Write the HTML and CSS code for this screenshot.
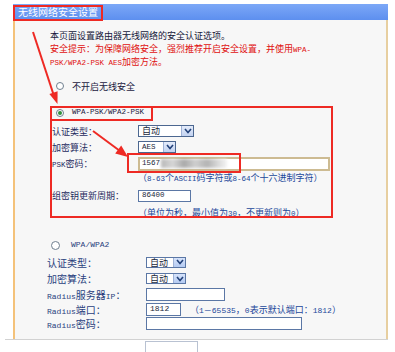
FILE: index.html
```html
<!DOCTYPE html>
<html lang="zh-CN">
<head>
<meta charset="utf-8">
<title>无线网络安全设置</title>
<link rel="stylesheet" href="styles.css">
</head>
<body>
<div class="page">
  <div class="panel">
    <div class="head">无线网络安全设置</div>
    <div class="body">
      <div class="intro">
        <p class="p1">本页面设置路由器无线网络的安全认证选项。</p>
        <p class="warn">安全提示：为保障网络安全，强烈推荐开启安全设置，并使用<span class="m">WPA-</span></p>
        <p class="warn"><span class="m">PSK/WPA2-PSK AES</span>加密方法。</p>
      </div>

      <div class="radio-row r1"><span class="radio"></span><span>不开启无线安全</span></div>
      <div class="radio-row r2"><span class="radio on"></span><span class="m">WPA-PSK/WPA2-PSK</span></div>

      <div class="sec top">
        <div class="row h16"><span class="lbl">认证类型：</span><span class="sel w56"><span class="val">自动</span><span class="btn"><svg viewBox="0 0 8 6" width="8" height="6"><polyline points="1,1 4,4.5 7,1" fill="none" stroke="#23427a" stroke-width="1.6"/></svg></span></span></div>
        <div class="row h16"><span class="lbl">加密算法：</span><span class="sel w38"><span class="val m">AES</span><span class="btn"><svg viewBox="0 0 8 6" width="8" height="6"><polyline points="1,1 4,4.5 7,1" fill="none" stroke="#23427a" stroke-width="1.6"/></svg></span></span></div>
        <div class="row h17"><span class="lbl"><span class="m">PSK</span>密码：</span><span class="psk"><span class="m">1567</span><span class="blur"></span></span></div>
        <div class="row h11"><span class="lbl"></span><span class="hint">（<span class="m">8-63</span>个<span class="m">ASCII</span>码字符或<span class="m">8-64</span>个十六进制字符）</span></div>
        <div class="row h19 mt3"><span class="lbl">组密钥更新周期：</span><span class="inp w53"><span class="m">86400</span></span></div>
        <div class="row h14"><span class="lbl"></span><span class="hint">（单位为秒，最小值为<span class="m">30</span>，不更新则为<span class="m">0</span>）</span></div>
      </div>

      <div class="radio-row r3"><span class="radio big"></span><span class="m2">WPA/WPA2</span></div>

      <div class="sec bot">
        <div class="row h16"><span class="lbl">认证类型：</span><span class="sel s2 w40"><span class="val">自动</span><span class="btn"><svg viewBox="0 0 8 6" width="8" height="6"><polyline points="1,1 4,4.5 7,1" fill="none" stroke="#23427a" stroke-width="1.6"/></svg></span></span></div>
        <div class="row h17"><span class="lbl">加密算法：</span><span class="sel s2 w40"><span class="val">自动</span><span class="btn"><svg viewBox="0 0 8 6" width="8" height="6"><polyline points="1,1 4,4.5 7,1" fill="none" stroke="#23427a" stroke-width="1.6"/></svg></span></span></div>
        <div class="row h15"><span class="lbl"><span class="m2">Radius</span>服务器<span class="m2">IP</span>：</span><span class="inp i2 w79"></span></div>
        <div class="row h14"><span class="lbl"><span class="m2">Radius</span>端口：</span><span class="inp i2 w35"><span class="m2">1812</span></span><span class="hint h2">（<span class="m2">1－65535</span>，<span class="m2">0</span>表示默认端口：<span class="m2">1812</span>）</span></div>
        <div class="row h14"><span class="lbl"><span class="m2">Radius</span>密码：</span><span class="inp i2 w156"></span></div>
      </div>
    </div>
  </div>
  <div class="rule"></div>
  <div class="stub"></div>
</div>

<svg class="ann" width="395" height="352" viewBox="0 0 395 352">
  <g fill="none" stroke="#ee2a24" stroke-width="2">
    <rect x="14" y="6" width="88" height="14"/>
    <rect x="51" y="107" width="281" height="110"/>
    <rect x="51" y="107" width="101" height="13"/>
    <rect x="128" y="154" width="112" height="18"/>
    <line x1="33" y1="32" x2="54" y2="96"/>
    <line x1="93" y1="131" x2="120" y2="151"/>
  </g>
  <g fill="#ee2a24">
    <polygon points="57.5,104 57.6,91.3 49.4,93.9"/>
    <polygon points="128,157 121.2,145.6 115.2,153.6"/>
  </g>
</svg>
</body>
</html>
```

FILE: styles.css
```css
* { box-sizing: border-box; margin: 0; padding: 0; }

body {
  background: #fff;
  font-family: "Noto Sans CJK SC", "Noto Sans", sans-serif;
  font-size: 9px;
  color: #1f2b52;
  width: 395px;
  height: 352px;
  overflow: hidden;
  position: relative;
}

.m { font-family: "Liberation Mono", "Noto Sans CJK SC", monospace; font-size: 7.5px; line-height: 1; }
.m2 { font-family: "Liberation Mono", "Noto Sans CJK SC", monospace; font-size: 8px; line-height: 1; }

.page { padding: 4px 0 0 13px; }

.panel { width: 375px; }

.head {
  height: 16px;
  background: linear-gradient(#7ca8f7, #5d8fef);
  color: #fff;
  font-size: 10px;
  line-height: 16px;
  padding-left: 5px;
}

.body {
  height: 319px;
  background: #f7f7f7;
  border-left: 2px solid #f4c27a;
  border-right: 2px solid #e7cfa0;
  padding-top: 9px;
  overflow: hidden;
}

.intro { margin-left: 35px; }
.intro p { height: 13px; line-height: 13px; white-space: nowrap; }
.p1 { color: #15183a; }
.warn { color: #e01010; }

.radio-row { display: flex; align-items: center; height: 14px; gap: 8px; }
.r1 { margin: 11px 0 0 41px; color: #1b2040; }
.r2 { margin: 13px 0 0 41px; color: #1b2040; }
.r3 { margin: 19px 0 0 36px; gap: 11px; color: #2a3f7e; }

.radio {
  width: 8px; height: 8px;
  border-radius: 50%;
  border: 1px solid #6f7f8f;
  background: #fff;
  display: flex; align-items: center; justify-content: center;
}
.radio.big { width: 9px; height: 9px; }
.radio.on::after {
  content: "";
  width: 4px; height: 4px;
  border-radius: 50%;
  background: #2f8f3c;
}

.sec .row { display: flex; align-items: center; }
.top { margin: 3px 0 0 37px; color: #1f2b5e; }
.top .lbl { width: 86px; flex: none; }
.bot { margin: 2px 0 0 32px; color: #2a3f7e; font-size: 10px; }
.bot .lbl { width: 99px; flex: none; }

.h11 { height: 11px; }
.h14 { height: 14px; }
.h15 { height: 15px; }
.h16 { height: 16px; }
.h17 { height: 17px; }
.h19 { height: 19px; }
.mt3 { margin-top: 3px; }

.sel {
  display: flex;
  height: 12px;
  border: 1px solid #4c6790;
  background: #fff;
  align-items: stretch;
}
.sel .val { flex: 1; padding-left: 3px; line-height: 10px; color: #1a1f3a; }
.sel .btn {
  width: 12px;
  background: linear-gradient(#e4ecfb, #c3d3f1);
  border-left: 1px solid #9fb2d6;
  display: flex; align-items: center; justify-content: center;
}
.sel.s2 { height: 11px; border-color: #5b77a5; }
.sel.s2 .val { line-height: 9px; font-size: 9px; }
.sel.s2 .btn { background: linear-gradient(#d6e3fb, #b5cbf2); }

.w56 { width: 56px; }
.w38 { width: 38px; }
.w40 { width: 40px; }
.w53 { width: 53px; }
.w79 { width: 79px; }
.w35 { width: 35px; }
.w156 { width: 156px; }

.psk {
  width: 192px;
  height: 14px;
  border: 2px solid #cdbb92;
  background: #fff;
  display: flex; align-items: center;
  padding-left: 2px;
  color: #1a1f3a;
}
.blur {
  width: 66px;
  height: 9px;
  margin-left: 1px;
  background: linear-gradient(90deg, #b8b8b8, #d6d6d6 18%, #a9a9a9 35%, #cfcfcf 52%, #b3b3b3 70%, #dcdcdc 88%, #f4f4f4);
  filter: blur(1.5px);
}

.inp {
  height: 12px;
  border: 1px solid #5b77a5;
  background: #fff;
  display: flex; align-items: center;
  padding-left: 3px;
  color: #1a1f3a;
}
.inp.i2 { height: 13px; }

.hint { color: #22479a; }
.hint.h2 { margin-left: 9px; font-size: 9px; color: #22479a; }

.rule {
  height: 1px;
  background: #d2d2d2;
  margin-left: -8px;
  width: 383px;
}
.stub {
  margin: 1px 0 0 132px;
  width: 53px;
  height: 14px;
  border: 1px solid #b9c2d2;
  border-bottom: none;
}

.ann { position: absolute; left: 0; top: 0; pointer-events: none; }
```
